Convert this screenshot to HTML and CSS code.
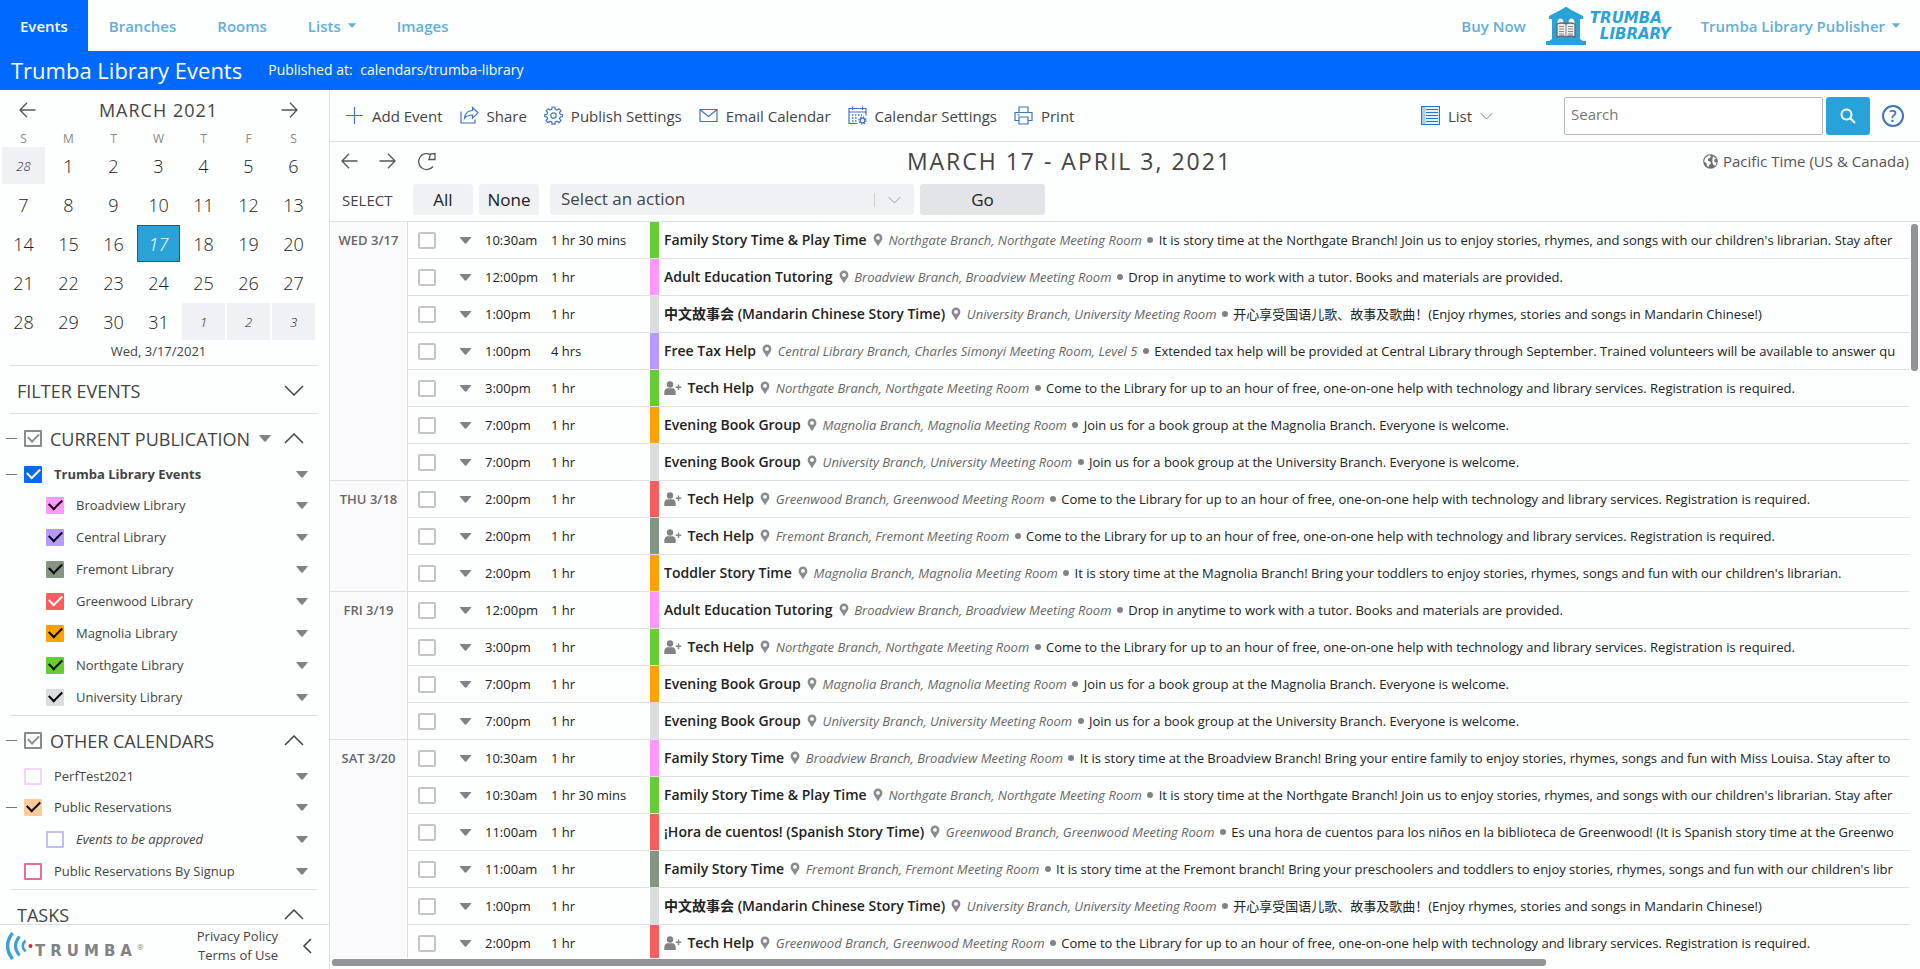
FILE: index.html
```html
<!DOCTYPE html>
<html lang="en">
<head>
<meta charset="utf-8">
<title>Trumba Library Events</title>
<link rel="stylesheet" href="styles.css">
</head>
<body>
<svg class="sprite" aria-hidden="true">
  <symbol id="pin" viewBox="0 0 10 14"><path fill-rule="evenodd" d="M5 .5A4.4 4.4 0 0 0 .6 4.9C.6 8 3.6 9.800 5 13.500 6.400 9.800 9.400 8 9.400 4.900A4.400 4.400 0 0 0 5 .5zM5 3a1.900 1.900 0 1 1 0 3.800A1.900 1.900 0 0 1 5 3z" fill="#8a8b8e"/></symbol>
  <symbol id="person" viewBox="0 0 18 14"><circle cx="6" cy="3.500" r="3.200" fill="#808285"/><path d="M.3 14v-2.500C.3 8.800 1.800 7.500 3.500 7.300h5C10.300 7.500 11.700 8.800 11.700 11.500V14z" fill="#808285"/><path d="M14.500 3.500v5.600M11.700 6.300h5.600" stroke="#808285" stroke-width="1.400"/></symbol>
  <symbol id="caret" viewBox="0 0 12 7"><path d="M.5 0h11q.6 0 .2.600L7 6.300q-1 .9-2 0L.3.600Q-.1 0 .5 0z" fill="currentColor"/></symbol>
  <symbol id="chevron" viewBox="0 0 20 11"><path d="M1 1l9 9 9-9" fill="none" stroke="currentColor" stroke-width="1.500"/></symbol>
  <symbol id="left" viewBox="0 0 17 16"><path d="M16.500 8H1M8 .800L1 8l7 7.200" fill="none" stroke="currentColor" stroke-width="1.300"/></symbol>
</svg>

<header class="topnav">
  <nav class="tabs">
    <a class="tab active" href="#">Events</a>
    <a class="tab" href="#">Branches</a>
    <a class="tab" href="#">Rooms</a>
    <a class="tab" href="#">Lists <svg class="nav-caret"><use href="#caret"/></svg></a>
    <a class="tab" href="#">Images</a>
  </nav>
  <a class="tab" href="#">Buy Now</a>
  <a class="logo" href="#">
    <svg class="logo-mark" viewBox="0 0 40 38"><path d="M20 0c1.500 0 2.500 1.500 5 2.700L37 9v3h-3v20l3 2h3v4H0v-4h3l3-2V12H3V9L15 2.700C17.500 1.500 18.500 0 20 0z" fill="#29a3d7"/><path d="M11.500 16q0-4.500 3-4.500t3 4.500v13h-6zM22.500 16q0-4.500 3-4.500t3 4.500v13h-6z" fill="#fff"/><path d="M11 17q5-2 9 0 4-2 9 0v13q-5-2-9 0-4-2-9 0z" fill="#eee" stroke="#666" stroke-width="1.300"/><path d="M20 17v13M13 19.500h5M13 22h5M13 24.500h5M13 27h5M22 19.500h5M22 22h5M22 24.500h5M22 27h5" stroke="#888"/></svg>
    <span class="logo-text"><span>TRUMBA</span><span class="logo-second">LIBRARY</span></span>
  </a>
  <a class="tab" href="#">Trumba Library Publisher <svg class="nav-caret"><use href="#caret"/></svg></a>
</header>

<div class="titlebar">
  <h1>Trumba Library Events</h1>
  <p>Published at: <a href="#">calendars/trumba-library</a></p>
</div>

<div class="body">
  <aside class="sidebar">
    <div class="side-scroll">
      <section class="minical">
        <div class="month">
          <button type="button" aria-label="Previous month"><svg class="arrow"><use href="#left"/></svg></button>
          <h2>MARCH 2021</h2>
          <button type="button" aria-label="Next month"><svg class="arrow flip"><use href="#left"/></svg></button>
        </div>
        <table class="days">
          <thead><tr><th>S</th><th>M</th><th>T</th><th>W</th><th>T</th><th>F</th><th>S</th></tr></thead>
          <tbody>
            <tr><td class="out">28</td><td>1</td><td>2</td><td>3</td><td>4</td><td>5</td><td>6</td></tr>
            <tr><td>7</td><td>8</td><td>9</td><td>10</td><td>11</td><td>12</td><td>13</td></tr>
            <tr><td>14</td><td>15</td><td>16</td><td class="today">17</td><td>18</td><td>19</td><td>20</td></tr>
            <tr><td>21</td><td>22</td><td>23</td><td>24</td><td>25</td><td>26</td><td>27</td></tr>
            <tr><td>28</td><td>29</td><td>30</td><td>31</td><td class="out">1</td><td class="out">2</td><td class="out">3</td></tr>
          </tbody>
        </table>
        <p class="today-label">Wed, 3/17/2021</p>
      </section>
      <section class="panel">
        <div class="head"><h2>FILTER EVENTS</h2><svg class="chev"><use href="#chevron"/></svg></div>
      </section>
      <section class="panel">
        <div class="head tree"><i class="dash"></i><input class="box all" type="checkbox" id="cp" checked><h2><label for="cp">CURRENT PUBLICATION</label></h2><svg class="caret"><use href="#caret"/></svg><svg class="chev up"><use href="#chevron"/></svg></div>
        <ul>
          <li class="main"><i class="dash"></i><input class="box light blue" type="checkbox" id="c0" checked><label for="c0">Trumba Library Events</label><svg class="caret"><use href="#caret"/></svg></li>
          <li class="sub"><input class="box pink" type="checkbox" id="c1" checked><label for="c1">Broadview Library</label><svg class="caret"><use href="#caret"/></svg></li>
          <li class="sub"><input class="box purple" type="checkbox" id="c2" checked><label for="c2">Central Library</label><svg class="caret"><use href="#caret"/></svg></li>
          <li class="sub"><input class="box sage" type="checkbox" id="c3" checked><label for="c3">Fremont Library</label><svg class="caret"><use href="#caret"/></svg></li>
          <li class="sub"><input class="box light red" type="checkbox" id="c4" checked><label for="c4">Greenwood Library</label><svg class="caret"><use href="#caret"/></svg></li>
          <li class="sub"><input class="box orange" type="checkbox" id="c5" checked><label for="c5">Magnolia Library</label><svg class="caret"><use href="#caret"/></svg></li>
          <li class="sub"><input class="box green" type="checkbox" id="c6" checked><label for="c6">Northgate Library</label><svg class="caret"><use href="#caret"/></svg></li>
          <li class="sub"><input class="box grey" type="checkbox" id="c7" checked><label for="c7">University Library</label><svg class="caret"><use href="#caret"/></svg></li>
        </ul>
      </section>
      <section class="panel">
        <div class="head tree"><i class="dash"></i><input class="box all" type="checkbox" id="oc" checked><h2><label for="oc">OTHER CALENDARS</label></h2><svg class="chev up"><use href="#chevron"/></svg></div>
        <ul>
          <li><input class="box line-pink" type="checkbox" id="o1"><label for="o1">PerfTest2021</label><svg class="caret"><use href="#caret"/></svg></li>
          <li><i class="dash"></i><input class="box peach" type="checkbox" id="o2" checked><label for="o2">Public Reservations</label><svg class="caret"><use href="#caret"/></svg></li>
          <li class="sub"><input class="box line-lilac" type="checkbox" id="o3"><label for="o3"><em>Events to be approved</em></label><svg class="caret"><use href="#caret"/></svg></li>
          <li><input class="box line-rose" type="checkbox" id="o4"><label for="o4">Public Reservations By Signup</label><svg class="caret"><use href="#caret"/></svg></li>
        </ul>
      </section>
      <section class="panel">
        <div class="head"><h2>TASKS</h2><svg class="chev up"><use href="#chevron"/></svg></div>
      </section>
    </div>
    <footer class="side-foot">
      <div class="brand">
        <svg class="brand-mark" viewBox="0 0 27 28"><g fill="none" stroke="#3aa0d0"><path d="M6.500 1Q-3.500 14 6.500 27" stroke-width="3.500"/><path d="M13.500 4.500Q5.500 14 13.500 23.500" stroke-width="3"/><path d="M19.500 8.500Q14 14 19.500 19.500" stroke-width="2.500"/></g><circle cx="24.500" cy="14" r="2" fill="#e0203a"/></svg>
        <span class="brand-name">TRUMBA</span><sup>®</sup>
      </div>
      <div class="legal"><a href="#">Privacy Policy</a><a href="#">Terms of Use</a></div>
      <button type="button" aria-label="Collapse sidebar"><svg class="collapse" viewBox="0 0 10 16"><path d="M9 1L2 8l7 7" fill="none" stroke="#444" stroke-width="1.600"/></svg></button>
    </footer>
  </aside>

  <main class="content">
    <div class="toolbar">
      <button class="tool" type="button"><svg class="icon" viewBox="0 0 19 19"><path d="M9.500 1v17M1 9.500h17"/></svg>Add Event</button>
      <button class="tool" type="button"><svg class="icon" viewBox="0 0 19 19"><path d="M1 5.500V17h14v-3.500M12.500 1.500v3C7 4.500 5 8 4.500 12.500 6.500 10 9 9 12.500 9v3.300L18 6.800z"/></svg>Share</button>
      <button class="tool" type="button"><svg class="icon" viewBox="0 0 19 19"><path d="M8.100 1h2.800l.4 2.300 1.700.7 1.900-1.300 2 2-1.400 1.900.7 1.700 2.300.4v1.900l-2.300.4-.7 1.700 1.400 1.900-2 2-1.900-1.400-1.700.7-.4 2.300H8.100l-.4-2.300-1.700-.7-1.900 1.400-2-2 1.400-1.900-.7-1.700L.7 10.600V8.700l2.200-.4.7-1.700-1.400-1.900 2-2L6 4l1.700-.7z"/><circle cx="9.500" cy="9.600" r="2.700"/></svg>Publish Settings</button>
      <button class="tool" type="button"><svg class="icon" viewBox="0 0 19 19"><path d="M1 3.500h17v12H1zM1.500 4l8 6.500L17.500 4"/></svg>Email Calendar</button>
      <button class="tool" type="button"><svg class="icon" viewBox="0 0 19 19"><path d="M9.500 17.500H1V2.500h17v7M1 6h17M4.500.500V4M14.500.500V4"/><path d="M4 9h10M4 12h6M4 15h5" stroke-dasharray="1.500 1.500" stroke-width="1.500"/><circle cx="14.500" cy="14.500" r="2.300"/><circle cx="14.500" cy="14.500" r="3.500" stroke-dasharray="1.400 1.350" stroke-width="1.400"/></svg>Calendar Settings</button>
      <button class="tool" type="button"><svg class="icon" viewBox="0 0 19 19"><path d="M5 6.500V1h9v5.500M5 14.500H1v-8h17v8h-4M5 11h9v7H5zM3.500 8.800h2"/></svg>Print</button>
      <button class="tool view" type="button"><svg class="icon icon-list" viewBox="0 0 19 19"><path d="M.5.500h18v18H.5z" fill="#e4f1fb"/><path d="M1 1h3.500v17H1z" fill="#a9cdee" stroke="none"/><path d="M5 3.500h12M5 6.500h12M5 9.500h12M5 12.500h12M5 15.500h12"/></svg>List <svg class="chev-sm"><use href="#chevron"/></svg></button>
      <form class="search">
        <input type="search" aria-label="Search" placeholder="Search">
        <button class="go-search" type="button" aria-label="Search"><svg viewBox="0 0 16 16"><circle cx="6.500" cy="6.500" r="5" fill="none" stroke="#fff" stroke-width="2"/><path d="M10.200 10.200l4.800 4.800" stroke="#fff" stroke-width="2.200"/></svg></button>
      </form>
      <button class="help" type="button" aria-label="Help">?</button>
    </div>

    <div class="range">
      <div class="range-nav">
        <button type="button" aria-label="Back"><svg class="arrow"><use href="#left"/></svg></button>
        <button type="button" aria-label="Forward"><svg class="arrow flip"><use href="#left"/></svg></button>
        <button type="button" aria-label="Refresh"><svg class="refresh" viewBox="0 0 19 19"><path d="M13 2.300A8 8 0 1 0 16 14.500M12 7.500L13.500 2l4.500-.5V7.500z" fill="none" stroke="#555" stroke-width="1.300"/></svg></button>
      </div>
      <h2>MARCH 17 - APRIL 3, 2021</h2>
      <div class="zone"><svg viewBox="0 0 15 15"><circle cx="7.500" cy="7.500" r="7.300" fill="#6d6f72"/><path d="M2.200 4L6 1.200l2 .8-1 2-2 .7v2l2.200.8.8 2-2 1.500-.6 2.500-1.500-2-.4-2.300L1 7.200zM10 2l3.200 2.500-2 1 .3 2.500 2.200.4-1.200 3-1.700.2L9.500 9l-.2-3z" fill="#fdfefe"/></svg>Pacific Time (US &amp; Canada)</div>
    </div>

    <div class="actions">
      <span class="select-label">SELECT</span>
      <button class="btn small" type="button">All</button>
      <button class="btn small" type="button">None</button>
      <div class="picker"><select aria-label="Select an action"><option>Select an action</option></select><i></i><svg><use href="#chevron"/></svg></div>
      <button class="btn go" type="button">Go</button>
    </div>

    <div class="list">
      <div class="list-view">
        <table class="events">
          <colgroup><col class="c-day"><col class="c-check"><col class="c-menu"><col class="c-time"><col class="c-dur"><col class="c-bar"><col></colgroup>
          <tbody>
            <tr><th rowspan="7" scope="rowgroup">WED 3/17</th><td><input type="checkbox" aria-label="Select event"></td><td><svg class="caret"><use href="#caret"/></svg></td><td>10:30am</td><td>1 hr 30 mins</td><td class="green"></td><td class="ev"><b>Family Story Time &amp; Play Time</b> <svg class="pin"><use href="#pin"/></svg> <em>Northgate Branch, Northgate Meeting Room</em> <i></i> It is story time at the Northgate Branch! Join us to enjoy stories, rhymes, and songs with our children's librarian. Stay after</td></tr>
            <tr><td><input type="checkbox" aria-label="Select event"></td><td><svg class="caret"><use href="#caret"/></svg></td><td>12:00pm</td><td>1 hr</td><td class="pink"></td><td class="ev"><b>Adult Education Tutoring</b> <svg class="pin"><use href="#pin"/></svg> <em>Broadview Branch, Broadview Meeting Room</em> <i></i> Drop in anytime to work with a tutor. Books and materials are provided.</td></tr>
            <tr><td><input type="checkbox" aria-label="Select event"></td><td><svg class="caret"><use href="#caret"/></svg></td><td>1:00pm</td><td>1 hr</td><td class="grey"></td><td class="ev"><b>中文故事会 (Mandarin Chinese Story Time)</b> <svg class="pin"><use href="#pin"/></svg> <em>University Branch, University Meeting Room</em> <i></i> 开心享受国语儿歌、故事及歌曲！(Enjoy rhymes, stories and songs in Mandarin Chinese!)</td></tr>
            <tr><td><input type="checkbox" aria-label="Select event"></td><td><svg class="caret"><use href="#caret"/></svg></td><td>1:00pm</td><td>4 hrs</td><td class="purple"></td><td class="ev"><b>Free Tax Help</b> <svg class="pin"><use href="#pin"/></svg> <em>Central Library Branch, Charles Simonyi Meeting Room, Level 5</em> <i></i> Extended tax help will be provided at Central Library through September. Trained volunteers will be available to answer qu</td></tr>
            <tr><td><input type="checkbox" aria-label="Select event"></td><td><svg class="caret"><use href="#caret"/></svg></td><td>3:00pm</td><td>1 hr</td><td class="green"></td><td class="ev"><svg class="person"><use href="#person"/></svg> <b>Tech Help</b> <svg class="pin"><use href="#pin"/></svg> <em>Northgate Branch, Northgate Meeting Room</em> <i></i> Come to the Library for up to an hour of free, one-on-one help with technology and library services. Registration is required.</td></tr>
            <tr><td><input type="checkbox" aria-label="Select event"></td><td><svg class="caret"><use href="#caret"/></svg></td><td>7:00pm</td><td>1 hr</td><td class="orange"></td><td class="ev"><b>Evening Book Group</b> <svg class="pin"><use href="#pin"/></svg> <em>Magnolia Branch, Magnolia Meeting Room</em> <i></i> Join us for a book group at the Magnolia Branch. Everyone is welcome.</td></tr>
            <tr><td><input type="checkbox" aria-label="Select event"></td><td><svg class="caret"><use href="#caret"/></svg></td><td>7:00pm</td><td>1 hr</td><td class="grey"></td><td class="ev"><b>Evening Book Group</b> <svg class="pin"><use href="#pin"/></svg> <em>University Branch, University Meeting Room</em> <i></i> Join us for a book group at the University Branch. Everyone is welcome.</td></tr>
          </tbody>
          <tbody>
            <tr><th rowspan="3" scope="rowgroup">THU 3/18</th><td><input type="checkbox" aria-label="Select event"></td><td><svg class="caret"><use href="#caret"/></svg></td><td>2:00pm</td><td>1 hr</td><td class="red"></td><td class="ev"><svg class="person"><use href="#person"/></svg> <b>Tech Help</b> <svg class="pin"><use href="#pin"/></svg> <em>Greenwood Branch, Greenwood Meeting Room</em> <i></i> Come to the Library for up to an hour of free, one-on-one help with technology and library services. Registration is required.</td></tr>
            <tr><td><input type="checkbox" aria-label="Select event"></td><td><svg class="caret"><use href="#caret"/></svg></td><td>2:00pm</td><td>1 hr</td><td class="sage"></td><td class="ev"><svg class="person"><use href="#person"/></svg> <b>Tech Help</b> <svg class="pin"><use href="#pin"/></svg> <em>Fremont Branch, Fremont Meeting Room</em> <i></i> Come to the Library for up to an hour of free, one-on-one help with technology and library services. Registration is required.</td></tr>
            <tr><td><input type="checkbox" aria-label="Select event"></td><td><svg class="caret"><use href="#caret"/></svg></td><td>2:00pm</td><td>1 hr</td><td class="orange"></td><td class="ev"><b>Toddler Story Time</b> <svg class="pin"><use href="#pin"/></svg> <em>Magnolia Branch, Magnolia Meeting Room</em> <i></i> It is story time at the Magnolia Branch! Bring your toddlers to enjoy stories, rhymes, songs and fun with our children's librarian.</td></tr>
          </tbody>
          <tbody>
            <tr><th rowspan="4" scope="rowgroup">FRI 3/19</th><td><input type="checkbox" aria-label="Select event"></td><td><svg class="caret"><use href="#caret"/></svg></td><td>12:00pm</td><td>1 hr</td><td class="pink"></td><td class="ev"><b>Adult Education Tutoring</b> <svg class="pin"><use href="#pin"/></svg> <em>Broadview Branch, Broadview Meeting Room</em> <i></i> Drop in anytime to work with a tutor. Books and materials are provided.</td></tr>
            <tr><td><input type="checkbox" aria-label="Select event"></td><td><svg class="caret"><use href="#caret"/></svg></td><td>3:00pm</td><td>1 hr</td><td class="green"></td><td class="ev"><svg class="person"><use href="#person"/></svg> <b>Tech Help</b> <svg class="pin"><use href="#pin"/></svg> <em>Northgate Branch, Northgate Meeting Room</em> <i></i> Come to the Library for up to an hour of free, one-on-one help with technology and library services. Registration is required.</td></tr>
            <tr><td><input type="checkbox" aria-label="Select event"></td><td><svg class="caret"><use href="#caret"/></svg></td><td>7:00pm</td><td>1 hr</td><td class="orange"></td><td class="ev"><b>Evening Book Group</b> <svg class="pin"><use href="#pin"/></svg> <em>Magnolia Branch, Magnolia Meeting Room</em> <i></i> Join us for a book group at the Magnolia Branch. Everyone is welcome.</td></tr>
            <tr><td><input type="checkbox" aria-label="Select event"></td><td><svg class="caret"><use href="#caret"/></svg></td><td>7:00pm</td><td>1 hr</td><td class="grey"></td><td class="ev"><b>Evening Book Group</b> <svg class="pin"><use href="#pin"/></svg> <em>University Branch, University Meeting Room</em> <i></i> Join us for a book group at the University Branch. Everyone is welcome.</td></tr>
          </tbody>
          <tbody>
            <tr><th rowspan="6" scope="rowgroup">SAT 3/20</th><td><input type="checkbox" aria-label="Select event"></td><td><svg class="caret"><use href="#caret"/></svg></td><td>10:30am</td><td>1 hr</td><td class="pink"></td><td class="ev"><b>Family Story Time</b> <svg class="pin"><use href="#pin"/></svg> <em>Broadview Branch, Broadview Meeting Room</em> <i></i> It is story time at the Broadview Branch! Bring your entire family to enjoy stories, rhymes, songs and fun with Miss Louisa. Stay after to</td></tr>
            <tr><td><input type="checkbox" aria-label="Select event"></td><td><svg class="caret"><use href="#caret"/></svg></td><td>10:30am</td><td>1 hr 30 mins</td><td class="green"></td><td class="ev"><b>Family Story Time &amp; Play Time</b> <svg class="pin"><use href="#pin"/></svg> <em>Northgate Branch, Northgate Meeting Room</em> <i></i> It is story time at the Northgate Branch! Join us to enjoy stories, rhymes, and songs with our children's librarian. Stay after</td></tr>
            <tr><td><input type="checkbox" aria-label="Select event"></td><td><svg class="caret"><use href="#caret"/></svg></td><td>11:00am</td><td>1 hr</td><td class="red"></td><td class="ev"><b>¡Hora de cuentos! (Spanish Story Time)</b> <svg class="pin"><use href="#pin"/></svg> <em>Greenwood Branch, Greenwood Meeting Room</em> <i></i> Es una hora de cuentos para los niños en la biblioteca de Greenwood! (It is Spanish story time at the Greenwo</td></tr>
            <tr><td><input type="checkbox" aria-label="Select event"></td><td><svg class="caret"><use href="#caret"/></svg></td><td>11:00am</td><td>1 hr</td><td class="sage"></td><td class="ev"><b>Family Story Time</b> <svg class="pin"><use href="#pin"/></svg> <em>Fremont Branch, Fremont Meeting Room</em> <i></i> It is story time at the Fremont branch! Bring your preschoolers and toddlers to enjoy stories, rhymes, songs and fun with our children's libr</td></tr>
            <tr><td><input type="checkbox" aria-label="Select event"></td><td><svg class="caret"><use href="#caret"/></svg></td><td>1:00pm</td><td>1 hr</td><td class="grey"></td><td class="ev"><b>中文故事会 (Mandarin Chinese Story Time)</b> <svg class="pin"><use href="#pin"/></svg> <em>University Branch, University Meeting Room</em> <i></i> 开心享受国语儿歌、故事及歌曲！(Enjoy rhymes, stories and songs in Mandarin Chinese!)</td></tr>
            <tr><td><input type="checkbox" aria-label="Select event"></td><td><svg class="caret"><use href="#caret"/></svg></td><td>2:00pm</td><td>1 hr</td><td class="red"></td><td class="ev"><svg class="person"><use href="#person"/></svg> <b>Tech Help</b> <svg class="pin"><use href="#pin"/></svg> <em>Greenwood Branch, Greenwood Meeting Room</em> <i></i> Come to the Library for up to an hour of free, one-on-one help with technology and library services. Registration is required.</td></tr>
          </tbody>
        </table>
      </div>
      <div class="vbar"><div class="vthumb"></div></div>
      <div class="hbar"><div class="hthumb"></div></div>
    </div>
  </main>
</div>
</body>
</html>
```
FILE: styles.css
```css
* { box-sizing: border-box; }
body {
  margin: 0;
  height: 100vh;
  display: flex;
  flex-direction: column;
  overflow: hidden;
  background: #fdfefe;
  color: #444;
  font-family: "Open Sans", "Noto Sans CJK SC", sans-serif;
  font-size: 14px;
}
h1, h2, p, ul { margin: 0; padding: 0; font-weight: 400; }
ul { list-style: none; }
a { color: inherit; text-decoration: none; }
button { font: inherit; color: inherit; background: none; border: 0; padding: 0; display: inline-flex; align-items: center; justify-content: center; }
svg { flex: none; }
.sprite { position: absolute; width: 0; height: 0; }

/* colours shared by calendars and events */
.blue { background: #0069ff; }
.pink { background: #ff99ff; }
.purple { background: #b799ff; }
.sage { background: #859581; }
.red { background: #f95e5e; }
.orange { background: #ffa200; }
.green { background: #66cc33; }
.grey { background: #dbdcde; }
.peach { background: #ffcc99; }

/* top navigation */
.topnav { flex: none; height: 51px; display: flex; align-items: stretch; color: #62aedb; }
.tabs { display: flex; gap: 1px; margin-right: auto; }
.tab { display: flex; align-items: center; gap: 7px; padding: 0 20px; font-size: 15px; font-weight: 600; white-space: nowrap; }
.tab.active { background: #0069ff; color: #fff; }
.nav-caret { width: 8px; height: 5px; }
.logo { display: flex; align-items: center; gap: 4px; padding-right: 10px; }
.logo-mark { width: 40px; height: 38px; }
.logo-text { display: flex; flex-direction: column; font: italic bold 15px/16px "DejaVu Sans", sans-serif; color: #29a3d7; }
.logo-second { padding-left: 10px; }

.titlebar { flex: none; height: 39px; display: flex; align-items: center; gap: 26px; padding: 0 11px 2px; background: #0069ff; color: #fff; }
.titlebar h1 { font-size: 22px; }
.titlebar p { font-size: 14px; }
.titlebar a { margin-left: 4px; }

.body { flex: 1; min-height: 0; display: flex; }

/* sidebar */
.sidebar { flex: none; width: 330px; display: flex; flex-direction: column; border-right: 1px solid #dcdee3; }
.side-scroll { flex: 1; min-height: 0; overflow: hidden; }
.month { display: flex; align-items: center; justify-content: space-between; padding: 0 31px 0 19px; height: 40px; }
.month h2 { font-size: 18px; letter-spacing: 1px; color: #444; }
.arrow { width: 17px; height: 16px; color: #555; }
.flip { transform: scaleX(-1); }
.days { border-collapse: separate; border-spacing: 2px; table-layout: fixed; width: 317px; }
.days th { height: 13px; padding: 0; font-size: 12px; line-height: 13px; font-weight: 400; color: #888; }
.days td { height: 37px; padding: 0; text-align: center; font-size: 18px; font-weight: 300; line-height: 20px; color: #222; }
.days .out { background: #f0f1f4; font-size: 13px; font-style: italic; }
.days .today { background: #29a3d7; border: 1px solid #146080; color: #fff; font-style: italic; }
.today-label { text-align: center; width: 317px; font-size: 13px; line-height: 18px; }
.minical { height: 275px; }
.panel { margin: 0 12px 0 10px; border-top: 1px solid #dcdee3; }
.head { display: flex; align-items: center; height: 47px; padding: 2px 13px 0 7px; }
.head h2 { font-size: 18px; color: #444; line-height: 24px; }
.head.tree { padding-left: 0; }
.head .chev { margin-left: auto; }
.chev { width: 20px; height: 11px; color: #444; }
.up { transform: scaleY(-1); }
.tree h2 { margin-left: 8px; }
.tree .caret { margin-left: 9px; }
.panel .dash { width: 11px; height: 1px; background: #777; margin-left: -4px; margin-right: 7px; }
.caret { width: 12px; height: 7px; color: #808285; }
.panel li { display: flex; align-items: center; height: 32px; padding-right: 9px; font-size: 13px; }
.panel li:first-child { height: 28px; padding-bottom: 2px; }
.panel li.main { font-weight: 700; }
.panel li .caret { margin-left: auto; }
.panel li label { margin-left: 12px; }
.panel li > .box:first-child { margin-left: 14px; }
.panel li.sub > .box:first-child { margin-left: 36px; }
.panel ul { padding-bottom: 2px; }
.box { appearance: none; flex: none; width: 18px; height: 17px; margin: 0; border-radius: 1px; display: grid; place-items: center; }
.box:checked::before { content: ""; width: 11px; height: 6px; border: solid #000; border-width: 0 0 2px 2px; transform: translateY(-2px) rotate(-45deg); }
.box.light:checked::before { border-color: #fff; }
.box.all { border: 2px solid #8a8b8e; }
.box.all:checked::before { border-color: #8a8b8e; width: 9px; height: 5px; }
.line-pink { border: 2px solid #f5d4f7; }
.line-lilac { border: 2px solid #c0bff8; }
.line-rose { border: 2px solid #ec6b98; }

.side-foot { flex: none; height: 45px; display: flex; align-items: center; padding: 0 17px 2px 6px; border-top: 1px solid #dcdee3; }
.brand { display: flex; align-items: center; }
.brand-mark { width: 27px; height: 28px; }
.brand-name { margin-left: 2px; padding-top: 9px; font: bold 15px/18px "DejaVu Sans", sans-serif; letter-spacing: 5px; color: #808285; }
.brand sup { font-size: 8px; line-height: 9px; color: #808285; }
.legal { margin-left: auto; margin-right: 24px; display: flex; flex-direction: column; align-items: flex-end; font-size: 13px; line-height: 19px; }
.collapse { width: 10px; height: 16px; }

/* main area */
.content { flex: 1; min-width: 0; display: flex; flex-direction: column; }
.toolbar { flex: none; height: 52px; display: flex; align-items: center; gap: 17px; padding: 0 16px 0 15px; border-bottom: 1px solid #dcdee3; }
.tool { gap: 8px; font-size: 15px; white-space: nowrap; }
.icon { width: 19px; height: 19px; fill: none; stroke: #3f72c4; stroke-width: 1.200; }
.icon-list { stroke: #2b74c0; }
.view { margin-left: auto; margin-right: 54px; }
.chev-sm { width: 13px; height: 8px; color: #777; }
.search { display: flex; gap: 3px; margin-right: -5px; }
.search input { width: 259px; height: 38px; padding: 0 6px 3px; border: 1px solid #b4b6b9; border-radius: 2px; background: #fff; font: 15px "Open Sans", sans-serif; color: #555; }
.search input::placeholder { color: #777; }
.go-search { width: 44px; height: 38px; border-radius: 3px; background: #29a3d7; }
.go-search svg { width: 16px; height: 16px; }
.help { width: 22px; height: 22px; border: 2px solid #3f72c4; border-radius: 50%; color: #3f72c4; font-size: 16px; line-height: 18px; font-weight: 600; }

.range { flex: none; display: grid; grid-template-columns: auto 1fr auto; align-items: center; height: 40px; padding: 0 11px 2px; }
.range-nav { display: flex; gap: 21px; }
.refresh { width: 19px; height: 19px; }
.range h2 { font-size: 23px; line-height: 30px; letter-spacing: 2px; text-align: center; color: #444; }
.zone { display: flex; align-items: center; gap: 5px; font-size: 15px; line-height: 20px; color: #555; }
.zone svg { width: 15px; height: 15px; }
.actions { flex: none; height: 40px; display: flex; align-items: center; padding: 0 12px 4px; border-bottom: 1px solid #dcdee3; }
.select-label { width: 71px; font-size: 15px; }
.btn { height: 31px; border-radius: 3px; background: #f0f1f4; color: #222; font-size: 17px; }
.small { width: 60px; margin-right: 6px; }
.go { width: 125px; margin-left: 6px; background: #e3e4e7; }
.picker { position: relative; width: 364px; margin-left: 5px; }
.picker select { appearance: none; display: block; width: 100%; height: 31px; padding: 0 11px 2px; border: 0; border-radius: 3px; background: #f0f1f4; font: 17px "Open Sans", sans-serif; color: #444; }
.picker i { position: absolute; right: 39px; top: 9px; width: 1px; height: 14px; background: #ccc; }
.picker svg { position: absolute; right: 13px; top: 12px; width: 13px; height: 8px; color: #999; }

.list { flex: 1; min-height: 0; display: grid; grid-template-columns: minmax(0, 1fr) 11px; grid-template-rows: minmax(0, 1fr) 11px; }
.list-view { overflow: hidden; }
.events { width: 100%; table-layout: fixed; border-collapse: separate; border-spacing: 0; }
.events th, .events td { height: 37px; padding: 0; border-bottom: 1px solid #dfe1e6; text-align: left; white-space: nowrap; line-height: 20px; }
.events th { vertical-align: top; text-align: center; padding-top: 8px; font-size: 13px; font-weight: 600; color: #666; background: #fafafd; border-right: 1px solid #dcdee3; }
.events td { font-size: 13px; color: #222; }
.c-day { width: 78px; }
.c-check { width: 51px; }
.c-menu { width: 26px; }
.c-time { width: 66px; }
.c-dur { width: 99px; }
.c-bar { width: 9px; }
.events input { appearance: none; display: block; width: 18px; height: 17px; margin: 0 0 0 10px; border: 2px solid #c3c4c7; border-radius: 2px; background: #fff; }
.events .caret { display: block; width: 13px; }
.events .green, .events .pink, .events .grey, .events .purple, .events .orange, .events .red, .events .sage { background-clip: padding-box; }
.events .ev { padding-left: 5px; overflow: hidden; }
.ev b { font-size: 14px; font-weight: 600; }
.ev em { color: #666; }
.ev i { display: inline-block; width: 6px; height: 6px; margin: 0 2px; border-radius: 50%; background: #808285; vertical-align: 2px; }
.pin { width: 10px; height: 14px; margin: 0 2px 0 3px; vertical-align: -2px; }
.person { width: 18px; height: 14px; margin-right: 2px; vertical-align: -2px; }
.hbar { padding: 1px 0 0 2px; }
.hthumb { width: 77%; height: 7px; border-radius: 3px; background: #939497; }
.vbar { padding: 2px 0 0 2px; }
.vthumb { width: 7px; height: 20%; border-radius: 3px; background: #939497; }
```
